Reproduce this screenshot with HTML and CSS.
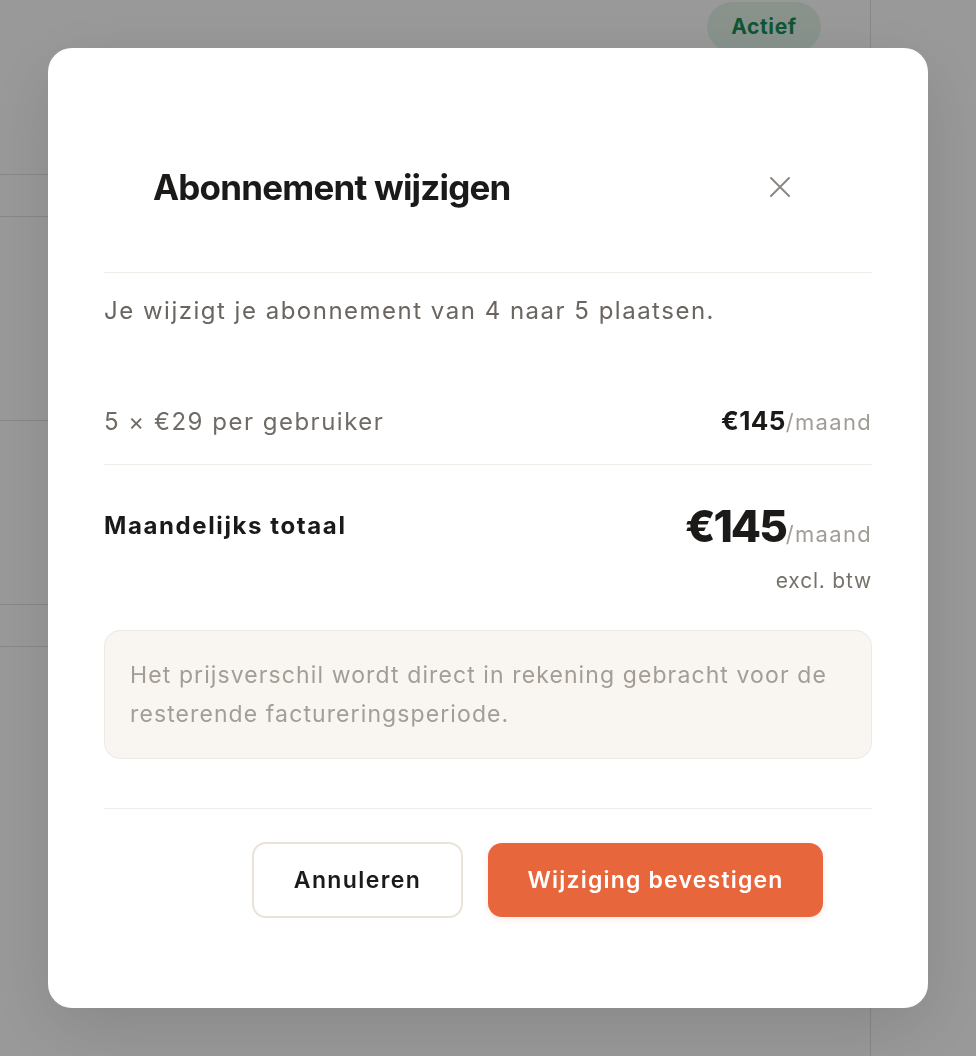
FILE: index.html
```html
<!DOCTYPE html>
<html lang="nl">
<head>
<meta charset="utf-8">
<title>Abonnement wijzigen</title>
<link rel="stylesheet" href="styles.css">
</head>
<body>
<div class="page">
  <div class="main">
    <div class="row row-a"><span class="badge">Actief</span></div>
    <div class="row row-b"></div>
    <div class="row row-c"></div>
    <div class="row row-d"></div>
    <div class="row row-e"></div>
    <div class="row row-f"></div>
  </div>
  <div class="side"></div>
</div>

<div class="overlay">
  <div class="modal" role="dialog" aria-labelledby="modal-title">
    <div class="modal-header">
      <h2 id="modal-title" class="modal-title">Abonnement wijzigen</h2>
      <button class="close-btn" aria-label="Sluiten">
        <svg width="22" height="22" viewBox="0 0 22 22" fill="none" stroke="currentColor" stroke-width="2" stroke-linecap="round"><path d="M2 2 L20 20 M20 2 L2 20"/></svg>
      </button>
    </div>

    <p class="intro">Je wijzigt je abonnement van 4 naar 5 plaatsen.</p>

    <div class="line-row">
      <span class="line-label">5 × €29 per gebruiker</span>
      <span class="line-price"><strong>€145</strong><span class="per">/maand</span></span>
    </div>

    <div class="total-row">
      <span class="total-label">Maandelijks totaal</span>
      <div class="total-right">
        <span class="total-price"><strong>€145</strong><span class="per">/maand</span></span>
        <span class="vat">excl. btw</span>
      </div>
    </div>

    <div class="info-box">Het prijsverschil wordt direct in rekening gebracht voor de resterende factureringsperiode.</div>

    <div class="modal-footer">
      <button class="btn btn-secondary">Annuleren</button>
      <button class="btn btn-primary">Wijziging bevestigen</button>
    </div>
  </div>
</div>
</body>
</html>
```

FILE: styles.css
```css
* { box-sizing: border-box; }

html, body {
  margin: 0;
  padding: 0;
  height: 100%;
}

body {
  font-family: Inter, "Noto Sans", sans-serif;
  background: #ffffff;
  overflow: hidden;
}

/* background page */
.page {
  display: grid;
  grid-template-columns: 871px 1fr;
  height: 1056px;
}

.main {
  border-right: 1px solid #e6e1db;
  display: flex;
  flex-direction: column;
}

.row { border-bottom: 1px solid #e6e1db; }
.row-a { height: 175px; display: flex; justify-content: flex-end; align-items: flex-start; padding: 2px 49px 0 0; }
.row-b { height: 42px; }
.row-c { height: 204px; }
.row-d { height: 184px; }
.row-e { height: 42px; }
.row-f { flex: 1; border-bottom: none; }

.badge {
  display: inline-flex;
  align-items: center;
  justify-content: center;
  width: 114px;
  height: 50px;
  border-radius: 25px;
  background: #e4f5ea;
  color: #178f57;
  font-weight: 700;
  font-size: 21px;
  letter-spacing: 0.6px;
  padding-bottom: 2px;
}

/* overlay */
.overlay {
  position: fixed;
  inset: 0;
  background: rgba(0, 0, 0, 0.4);
  display: flex;
  align-items: center;
  justify-content: center;
}

.modal {
  width: 880px;
  background: #ffffff;
  border-radius: 24px;
  padding: 0 56px 57px;
  box-shadow: 0 20px 70px rgba(0, 0, 0, 0.12);
}

.modal-header {
  display: flex;
  align-items: center;
  justify-content: space-between;
  padding: 119px 81px 65px 49px;
  border-bottom: 1px solid #efebe6;
}

.modal-title {
  margin: 0;
  font-size: 35px;
  line-height: 40px;
  font-weight: 700;
  letter-spacing: -0.8px;
  color: #1c1a19;
}

.close-btn {
  border: none;
  background: none;
  padding: 0;
  width: 22px;
  height: 22px;
  color: #8c8782;
  display: flex;
}

.intro {
  margin: 22px 0 0;
  font-size: 24px;
  line-height: 32px;
  color: #6b6560;
  letter-spacing: 1.5px;
}

.line-row {
  display: flex;
  justify-content: space-between;
  align-items: baseline;
  margin-top: 78px;
  padding-bottom: 24px;
  border-bottom: 1px solid #efebe6;
  line-height: 32px;
}

.line-label {
  font-size: 24px;
  color: #716b66;
  letter-spacing: 1.5px;
  line-height: 32px;
}

.line-price {
  line-height: 32px;
}

.line-price strong {
  font-size: 26px;
  font-weight: 700;
  color: #1c1a19;
  letter-spacing: 0.4px;
  line-height: 32px;
}

.per {
  font-size: 22px;
  color: #a19c97;
  letter-spacing: 1.3px;
  line-height: 32px;
}

.total-row {
  display: flex;
  justify-content: space-between;
  align-items: flex-start;
  padding-top: 37px;
}

.total-label {
  font-size: 24px;
  font-weight: 700;
  color: #1c1a19;
  line-height: 48px;
  letter-spacing: 1.6px;
}

.total-right {
  display: flex;
  flex-direction: column;
  align-items: flex-end;
}

.total-price {
  line-height: 48px;
}

.total-price strong {
  font-size: 44px;
  font-weight: 800;
  letter-spacing: -2px;
  color: #1c1a19;
  line-height: 48px;
}

.vat {
  margin-top: 8px;
  font-size: 21px;
  line-height: 26px;
  color: #77716c;
  letter-spacing: 0.8px;
}

.info-box {
  margin-top: 36px;
  background: #f9f6f2;
  border: 1px solid #eee9e2;
  border-radius: 16px;
  padding: 25px 25px 24px;
  font-size: 23px;
  line-height: 39px;
  color: #a39d96;
  letter-spacing: 1.1px;
}

.modal-footer {
  margin-top: 49px;
  border-top: 1px solid #efebe6;
  padding: 33px 49px 33px 0;
  display: flex;
  justify-content: flex-end;
  align-items: center;
  gap: 25px;
}

.btn {
  font-family: inherit;
  font-size: 23px;
  font-weight: 600;
  border-radius: 14px;
  cursor: pointer;
}

.btn-secondary {
  width: 211px;
  height: 76px;
  background: #ffffff;
  border: 2px solid #e9e3d8;
  color: #1c1a19;
  letter-spacing: 1.4px;
}

.btn-primary {
  width: 335px;
  height: 74px;
  background: #e8663c;
  border: none;
  color: #ffffff;
  letter-spacing: 1.2px;
  box-shadow: 0 2px 6px rgba(232, 102, 60, 0.15);
}
```
